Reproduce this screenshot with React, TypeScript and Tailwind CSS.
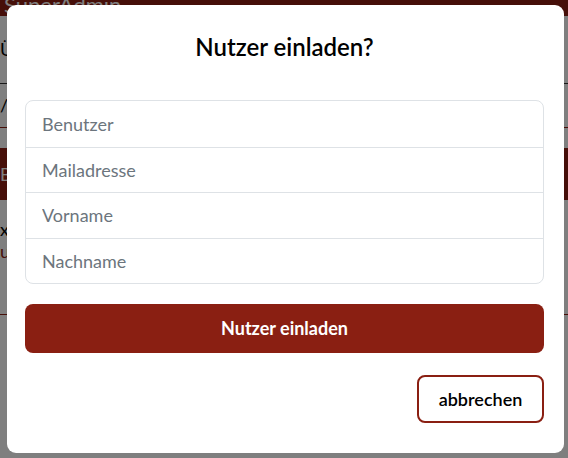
import { useState } from "react";

const fields = ["Benutzer", "Mailadresse", "Vorname", "Nachname"];

export default function App() {
  const [values, setValues] = useState<Record<string, string>>({});

  return (
    <div className="relative h-[458px] w-[568px] overflow-hidden bg-white" style={{ fontFamily: "Lato, 'Open Sans', sans-serif" }}>
      {/* Page behind the dialog */}
      <div className="flex flex-col">
        <div className="h-[16px] bg-[#8c1e12] pl-1 text-[22px] leading-[10px] text-white">SuperAdmin</div>
        <div className="flex h-[68px] items-end border-b border-[#333] pb-[20px] pl-0 text-[18px] text-black">
          Übersicht
        </div>
        <div className="flex h-[44px] items-center border-b border-[#8c1e12] text-[18px] text-black">/ Benutzer</div>
        <div className="h-[20px]" />
        <div className="flex h-[52px] items-center bg-[#8c1e12] text-[18px] text-white">Benutzerliste</div>
        <div className="flex flex-col pt-[18px] text-[18px] leading-[22px]">
          <span className="text-black">xaver</span>
          <span className="text-[#8c1e12]">user</span>
        </div>
        <div className="mt-[52px] border-b border-[#8c1e12]" />
      </div>

      {/* Overlay */}
      <div className="absolute inset-0 bg-black/50">
        <div className="ml-[7px] mt-[5px] flex h-[448px] w-[557px] flex-col rounded-[9px] bg-white pl-[18px] pr-[20px]">
          <h2 className="pt-[27px] text-center text-[24px] font-semibold leading-[30px] text-black">Nutzer einladen?</h2>

          <div className="mt-[38px] flex flex-col overflow-hidden rounded-[8px] border border-[#dee2e6]">
            {fields.map((f, i) => (
              <input
                key={f}
                placeholder={f}
                value={values[f] ?? ""}
                onChange={(e) => setValues({ ...values, [f]: e.target.value })}
                className={`h-[45.5px] w-full px-4 text-[18px] text-black placeholder-[#6c757d] outline-none ${i > 0 ? "border-t border-[#dee2e6]" : ""}`}
              />
            ))}
          </div>

          <button className="mt-[20px] h-[49px] w-full rounded-[8px] bg-[#8a1f12] text-[18px] font-bold text-white">
            Nutzer einladen
          </button>

          <div className="mt-[22px] flex justify-end">
            <button className="h-[48px] w-[127px] rounded-[8px] border-2 border-[#8a1f12] bg-white text-[18px] font-semibold text-black">
              abbrechen
            </button>
          </div>
        </div>
      </div>
    </div>
  );
}
